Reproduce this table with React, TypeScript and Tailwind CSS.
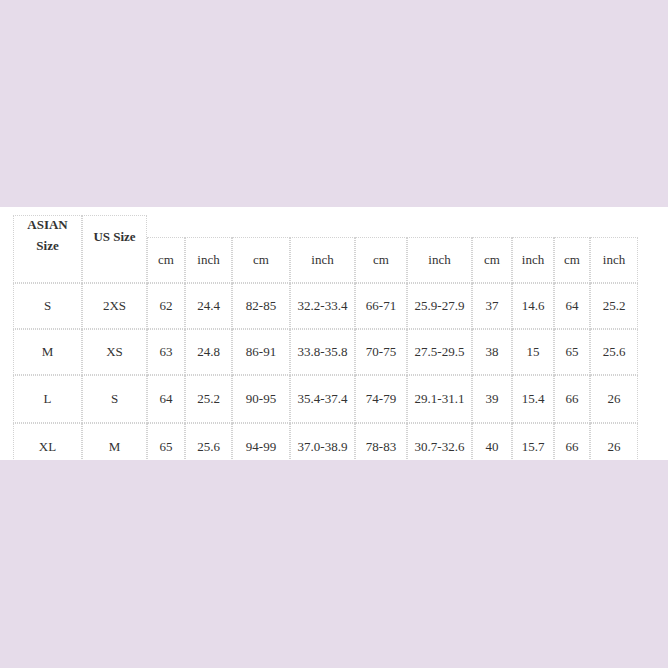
const cols = [69, 65, 38, 47, 58, 65, 52, 65, 40, 42, 36, 48];

const sub = ['cm', 'inch', 'cm', 'inch', 'cm', 'inch', 'cm', 'inch', 'cm', 'inch'];

const rows = [
  ['S', '2XS', '62', '24.4', '82-85', '32.2-33.4', '66-71', '25.9-27.9', '37', '14.6', '64', '25.2'],
  ['M', 'XS', '63', '24.8', '86-91', '33.8-35.8', '70-75', '27.5-29.5', '38', '15', '65', '25.6'],
  ['L', 'S', '64', '25.2', '90-95', '35.4-37.4', '74-79', '29.1-31.1', '39', '15.4', '66', '26'],
  ['XL', 'M', '65', '25.6', '94-99', '37.0-38.9', '78-83', '30.7-32.6', '40', '15.7', '66', '26'],
];

const line = 'border-[1.5px] border-dotted border-[#d2d2d2]';
const cell = `flex items-center justify-center text-center ${line}`;

export default function App() {
  return (
    <div className="w-[668px] h-[668px] bg-[#e6dcea] flex flex-col font-['Liberation_Serif',serif] text-[13px] text-[#333]">
      <div className="h-[207px]" />
      <div className="h-[253px] bg-white pt-[8px] pl-[13px] overflow-hidden">
        <div
          className="grid"
          style={{
            gridTemplateColumns: cols.map((c) => `${c}px`).join(' '),
            gridTemplateRows: '22px 46px 46px 46px 48px 48px',
          }}
        >
          <div className={`row-span-2 flex flex-col items-center font-bold leading-[21px] ${line}`}>
            <span className="-mt-[2px]">ASIAN</span>
            <span>Size</span>
          </div>
          <div className={`row-span-2 flex justify-center pt-[11px] font-bold ${line}`}>
            US Size
          </div>
          <div className="col-span-10" />
          {sub.map((s, i) => (
            <div key={i} className={cell}>
              {s}
            </div>
          ))}
          {rows.map((r, ri) =>
            r.map((v, ci) => (
              <div key={`${ri}-${ci}`} className={cell}>
                {v}
              </div>
            ))
          )}
        </div>
      </div>
      <div className="flex-1" />
    </div>
  );
}
